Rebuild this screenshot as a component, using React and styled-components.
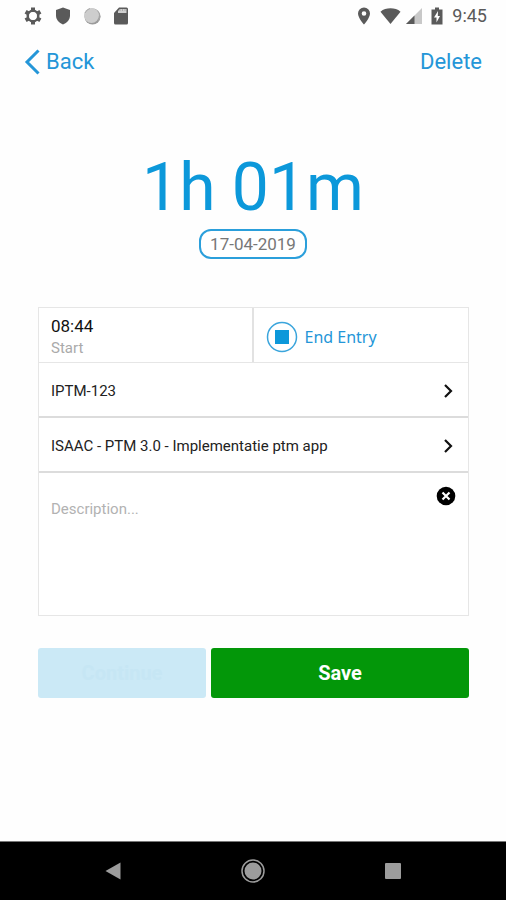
import React, { useState } from "react";
import styled, { createGlobalStyle } from "styled-components";

const GlobalStyle = createGlobalStyle`
  * {
    box-sizing: border-box;
  }
  body {
    margin: 0;
    background: #fefefe;
    font-family: Roboto, "Noto Sans", sans-serif;
  }
  button,
  textarea {
    font-family: inherit;
  }
`;

const Screen = styled.div`
  min-height: 100vh;
  display: flex;
  flex-direction: column;
`;

const StatusBar = styled.div`
  height: 32px;
  padding: 0 19px 0 23px;
  display: flex;
  justify-content: space-between;
  align-items: center;
  color: #5a5a5a;
  svg {
    display: block;
  }
`;

const StatusGroup = styled.div`
  display: flex;
  align-items: center;
  gap: ${(props) => props.$gap}px;
`;

const Clock = styled.span`
  font-size: 18px;
  line-height: 32px;
`;

const Header = styled.header`
  height: 60px;
  padding: 0 24px;
  display: flex;
  justify-content: space-between;
  align-items: center;
`;

const HeaderButton = styled.button`
  display: flex;
  align-items: center;
  gap: 6px;
  padding: 0;
  border: none;
  background: none;
  color: #2496d8;
  font-size: 22px;
  line-height: 28px;
  cursor: pointer;
`;

const Summary = styled.section`
  padding-top: 54px;
  display: flex;
  flex-direction: column;
  align-items: center;
`;

const Duration = styled.h1`
  margin: 0;
  color: #0c98da;
  font-size: 66px;
  font-weight: 400;
  line-height: 83px;
`;

const DateButton = styled.button`
  height: 30px;
  padding: 0 9px;
  border: 2px solid #2b9fdb;
  border-radius: 12px;
  background: #fff;
  color: #777;
  font-size: 17px;
  line-height: 26px;
  cursor: pointer;
`;

const Form = styled.form`
  margin: 48px 37px 0 38px;
`;

const Card = styled.div`
  border: 1px solid #e6e6e6;
  background: #fff;
`;

const TimeRow = styled.div`
  height: 55px;
  display: grid;
  grid-template-columns: 1fr 1fr;
  border-bottom: 1px solid #e6e6e6;
`;

const StartTime = styled.button`
  padding: 3px 12px 0;
  border: none;
  border-right: 2px solid #e2e2e2;
  background: none;
  text-align: left;
  cursor: pointer;
`;

const StartValue = styled.span`
  display: block;
  color: #111;
  font-size: 17px;
  line-height: 22px;
`;

const StartLabel = styled.span`
  display: block;
  color: #aaa;
  font-size: 15px;
  line-height: 22px;
`;

const EndButton = styled.button`
  display: flex;
  align-items: center;
  gap: 7px;
  padding: 3px 12px 0;
  border: none;
  background: none;
  color: #2496d8;
  font-family: "Noto Sans", sans-serif;
  font-size: 16px;
  cursor: pointer;
`;

const PickerRow = styled.button`
  width: 100%;
  height: 55px;
  padding: 2px 15px 0 12px;
  display: flex;
  justify-content: space-between;
  align-items: center;
  border: none;
  border-bottom: 2px solid #dcdcdc;
  background: none;
  color: #222;
  font-size: 15px;
  text-align: left;
  cursor: pointer;
`;

const DescriptionRow = styled.div`
  height: 142px;
  padding: 13px 12px 8px;
  display: flex;
  align-items: flex-start;
`;

const Description = styled.textarea`
  flex: 1;
  height: 100%;
  padding: 13px 0 0;
  border: none;
  outline: none;
  resize: none;
  background: none;
  color: #222;
  font-size: 15px;
  line-height: 20px;
  &::placeholder {
    color: #b2b2b2;
  }
`;

const ClearButton = styled.button`
  padding: 0;
  border: none;
  background: none;
  cursor: pointer;
  svg {
    display: block;
  }
`;

const Actions = styled.div`
  margin-top: 32px;
  display: grid;
  grid-template-columns: 168fr 258fr;
  gap: 5px;
`;

const ActionButton = styled.button`
  height: 50px;
  padding: 0;
  border: none;
  border-radius: 3px;
  background: ${(props) => (props.$primary ? "#039709" : "#cbe9f6")};
  color: ${(props) => (props.$primary ? "#fff" : "#c6e6f4")};
  font-size: 20px;
  font-weight: 700;
  cursor: ${(props) => (props.disabled ? "default" : "pointer")};
`;

const NavigationBar = styled.nav`
  height: 59px;
  margin-top: auto;
  padding: 0 43px;
  display: grid;
  grid-template-columns: repeat(3, 1fr);
  border-top: 1px solid #777;
  background: #000;
`;

const NavigationButton = styled.button`
  display: flex;
  justify-content: center;
  align-items: center;
  padding: 0;
  border: none;
  background: none;
  cursor: pointer;
`;

const SettingsIcon = () => (
  <svg width="20" height="20" viewBox="0 0 20 20">
    <g stroke="#5a5a5a" fill="none">
      <circle cx="10" cy="10" r="5.2" strokeWidth="2.6" />
      <path
        d="M10 5V1.5M10 15v3.5M5.7 7.500L2.600 5.700M14.300 12.500l3.100 1.800M14.300 7.500l3.100-1.800M5.700 12.500l-3.100 1.800"
        strokeWidth="4"
      />
    </g>
    <circle cx="10" cy="10" r="3.7" fill="#fefefe" />
  </svg>
);

const ShieldIcon = () => (
  <svg width="16" height="18" viewBox="0 0 16 18">
    <path d="M8 0.5L15 3v5.5c0 4-3 7.5-7 9-4-1.5-7-5-7-9V3z" fill="#5a5a5a" />
  </svg>
);

const SyncIcon = () => (
  <svg width="18" height="18" viewBox="0 0 18 18">
    <circle cx="9.5" cy="9.5" r="8" fill="#9a9a9a" />
    <circle cx="8.5" cy="8.5" r="7.5" fill="#cdcdcd" />
    <path d="M2 6a8 8 0 0 1 5-4.5M16.5 6.5a8 8 0 0 1-1 7" stroke="#aaa" fill="none" />
  </svg>
);

const SdCardIcon = () => (
  <svg width="16" height="18" viewBox="0 0 15 18">
    <path d="M5.5 0.5H13a1.5 1.5 0 0 1 1.5 1.5v14a1.5 1.5 0 0 1-1.5 1.5H2A1.5 1.5 0 0 1 .5 16V6z" fill="#5a5a5a" />
    <path d="M6.5 2H13v4H4.5V4z" fill="#cfcfcf" />
    <path d="M6.5 2v2M9 2v2M11.5 2v2" stroke="#aaa" />
  </svg>
);

const PinIcon = () => (
  <svg width="14" height="18" viewBox="0 0 14 18">
    <path
      d="M7 0.5a6 6 0 0 0-6 6C1 11 7 17.5 7 17.5S13 11 13 6.5a6 6 0 0 0-6-6zM7 4.2a2.3 2.3 0 1 1 0 4.6 2.3 2.3 0 0 1 0-4.6z"
      fill="#5a5a5a"
      fillRule="evenodd"
    />
  </svg>
);

const WifiIcon = () => (
  <svg width="21" height="18" viewBox="0 0 22 18">
    <path d="M11 17.5L0.5 4.5C3.5 2 7 1 11 1s7.5 1 10.5 3.5z" fill="#5a5a5a" />
  </svg>
);

const SignalIcon = () => (
  <svg width="17" height="18" viewBox="0 0 17 18">
    <path d="M17 1v16H1z" fill="#c8c8c8" />
    <path d="M9.5 8.5V17H1z" fill="#5a5a5a" />
  </svg>
);

const BatteryIcon = () => (
  <svg width="12" height="18" viewBox="0 0 12 18">
    <path d="M4 0.5h4v2h3.5V17.5H.5V2.5H4z" fill="#5a5a5a" />
    <path d="M7 4L3 10.5h2.5V15.5L9 9H6.8z" fill="#fff" />
  </svg>
);

const BackIcon = () => (
  <svg width="16" height="26" viewBox="0 0 16 26">
    <path d="M14.5 1.5L3 13l11.5 11.5" stroke="#2496d8" strokeWidth="3" fill="none" />
  </svg>
);

const StopIcon = () => (
  <svg width="32" height="32" viewBox="0 0 32 32">
    <circle cx="16" cy="16" r="14.5" stroke="#3ba5dc" strokeWidth="1.5" fill="none" />
    <rect x="9" y="9" width="14" height="14" fill="#0c98da" />
  </svg>
);

const ChevronIcon = () => (
  <svg width="10" height="16" viewBox="0 0 10 16">
    <path d="M2 2l6 6-6 6" stroke="#111" strokeWidth="2.2" fill="none" />
  </svg>
);

const ClearIcon = () => (
  <svg width="20" height="20" viewBox="0 0 20 20">
    <circle cx="10" cy="10" r="9.3" fill="#000" />
    <path d="M6.5 6.5l7 7M13.5 6.5l-7 7" stroke="#fff" strokeWidth="2.2" />
  </svg>
);

export default function App() {
  const [description, setDescription] = useState("");

  return (
    <Screen>
      <GlobalStyle />
      <StatusBar>
        <StatusGroup $gap={12}>
          <SettingsIcon />
          <ShieldIcon />
          <SyncIcon />
          <SdCardIcon />
        </StatusGroup>
        <StatusGroup $gap={9}>
          <PinIcon />
          <StatusGroup $gap={4}>
            <WifiIcon />
            <SignalIcon />
          </StatusGroup>
          <BatteryIcon />
          <Clock>9:45</Clock>
        </StatusGroup>
      </StatusBar>

      <Header>
        <HeaderButton type="button">
          <BackIcon />
          Back
        </HeaderButton>
        <HeaderButton type="button">Delete</HeaderButton>
      </Header>

      <Summary>
        <Duration>1h 01m</Duration>
        <DateButton type="button">17-04-2019</DateButton>
      </Summary>

      <Form onSubmit={(e) => e.preventDefault()}>
        <Card>
          <TimeRow>
            <StartTime type="button">
              <StartValue>08:44</StartValue>
              <StartLabel>Start</StartLabel>
            </StartTime>
            <EndButton type="button">
              <StopIcon />
              End Entry
            </EndButton>
          </TimeRow>
          <PickerRow type="button">
            IPTM-123
            <ChevronIcon />
          </PickerRow>
          <PickerRow type="button">
            ISAAC - PTM 3.0 - Implementatie ptm app
            <ChevronIcon />
          </PickerRow>
          <DescriptionRow>
            <Description
              aria-label="Description"
              placeholder="Description..."
              value={description}
              onChange={(e) => setDescription(e.target.value)}
            />
            <ClearButton
              type="button"
              aria-label="Clear description"
              onClick={() => setDescription("")}
            >
              <ClearIcon />
            </ClearButton>
          </DescriptionRow>
        </Card>
        <Actions>
          <ActionButton type="button" disabled>
            Continue
          </ActionButton>
          <ActionButton type="submit" $primary>
            Save
          </ActionButton>
        </Actions>
      </Form>

      <NavigationBar>
        <NavigationButton type="button" aria-label="Back">
          <svg width="16" height="18" viewBox="0 0 16 18">
            <path d="M15.5 0.5v17L0.5 9z" fill="#9c9c9c" />
          </svg>
        </NavigationButton>
        <NavigationButton type="button" aria-label="Home">
          <svg width="24" height="24" viewBox="0 0 24 24">
            <circle cx="12" cy="12" r="11" stroke="#9c9c9c" strokeWidth="1.5" fill="none" />
            <circle cx="12" cy="12" r="8.5" fill="#9c9c9c" />
          </svg>
        </NavigationButton>
        <NavigationButton type="button" aria-label="Overview">
          <svg width="16" height="16" viewBox="0 0 16 16">
            <rect width="16" height="16" rx="1" fill="#9c9c9c" />
          </svg>
        </NavigationButton>
      </NavigationBar>
    </Screen>
  );
}
